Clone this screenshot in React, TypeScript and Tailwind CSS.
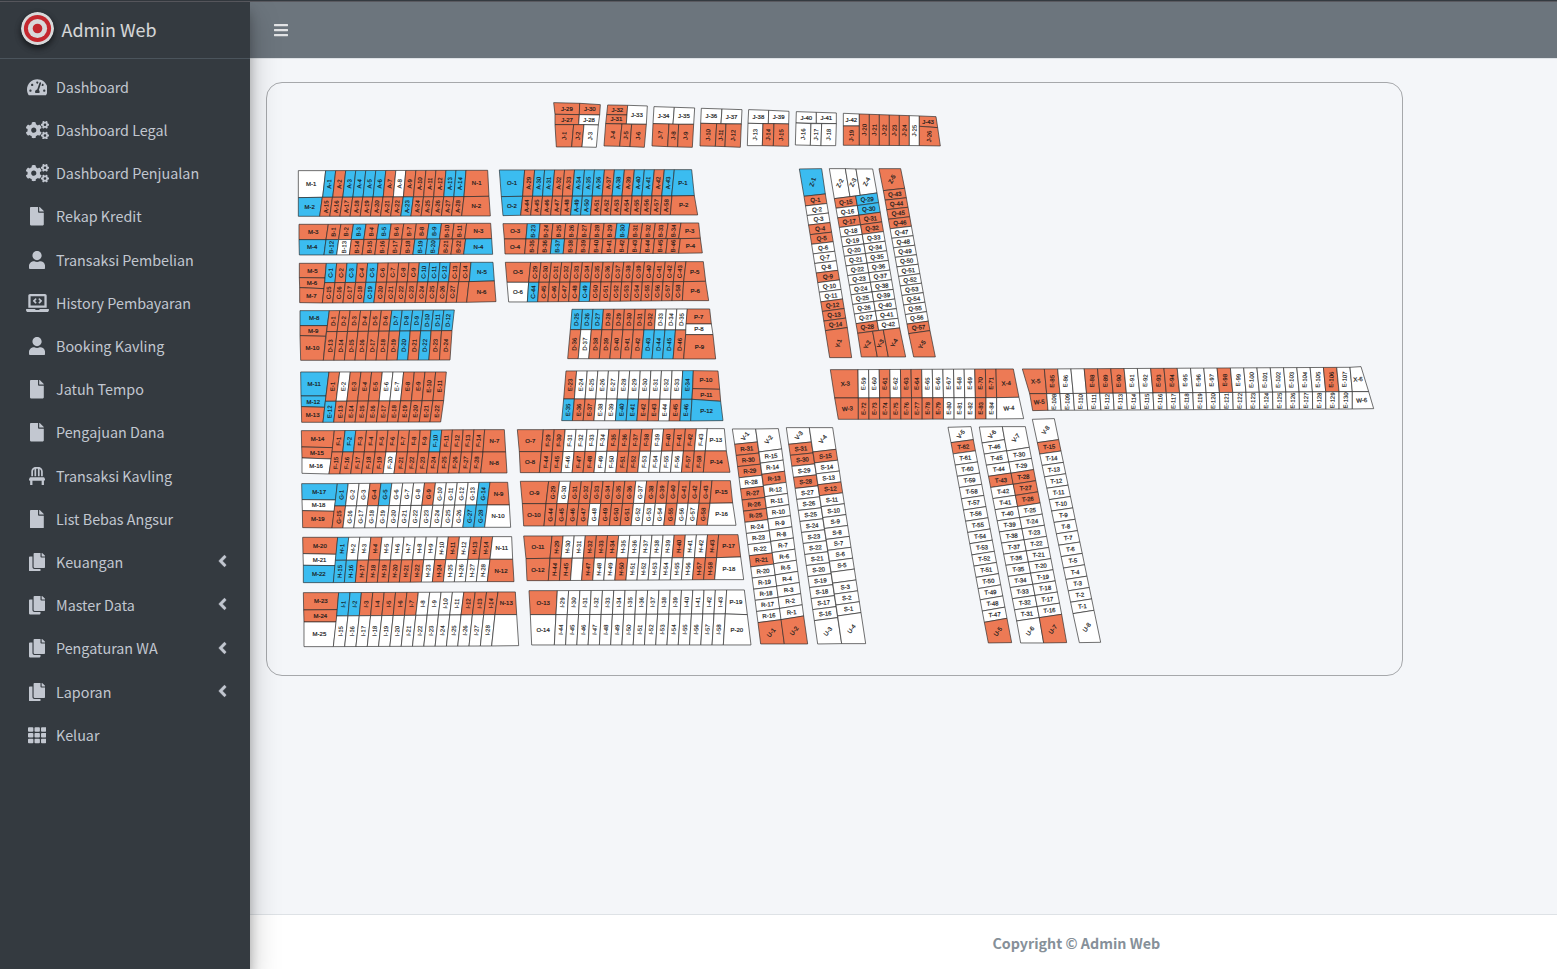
import React from 'react';
import type { IconType } from 'react-icons';
import {
  FaAngleLeft,
  FaBars,
  FaChair,
  FaCogs,
  FaCopy,
  FaFile,
  FaLaptopCode,
  FaTachometerAlt,
  FaTh,
  FaUser,
} from 'react-icons/fa';

type Status = 'o' | 'b' | 'w';
type Quad = number[]; // top-left, top-right, bottom-right, bottom-left

const FILL: Record<Status, string> = { o: '#ed7a55', b: '#3bbcf0', w: '#ffffff' };

interface LotProps {
  q: Quad;
  s: Status;
  t?: string;
  r?: number;
}

/* A single plot: outline, status colour and its label turned by r degrees. */
function Lot({ q, s, t, r = 0 }: LotProps) {
  const cx = (q[0] + q[2] + q[4] + q[6]) / 4;
  const cy = (q[1] + q[3] + q[5] + q[7]) / 4;
  const upright = r === -88;
  return (
    <g>
      <polygon points={q.join(' ')} fill={FILL[s]} stroke="#2b2b2b" strokeOpacity="0.72" strokeWidth="2.8" />
      {t && (
        <text
          x={0}
          y={6.3}
          textAnchor="middle"
          transform={`translate(${cx} ${cy}) rotate(${r})`}
          fill={upright ? '#101010' : '#1c1c1c'}
          stroke={upright ? '#101010' : '#1c1c1c'}
          strokeWidth={upright ? 0.3 : 0.6}
        >
          {t}
        </text>
      )}
    </g>
  );
}

interface StripProps {
  q: Quad;
  p: string;
  from: number;
  c: string;
  down?: boolean;
  step?: number;
  skip?: number;
}

/* A run of equal plots; "down" stacks them instead of lining them up. */
function Strip({ q, p, from, c, down, step = 1, skip }: StripProps) {
  const n = c.length;
  const mix = (a: number, b: number, k: number) => a + (b - a) * k;
  return (
    <>
      {c.split('').map((s, i) => {
        const k = i / n;
        const m = (i + 1) / n;
        const cell = down
          ? [
              mix(q[0], q[6], k), mix(q[1], q[7], k), mix(q[2], q[4], k), mix(q[3], q[5], k),
              mix(q[2], q[4], m), mix(q[3], q[5], m), mix(q[0], q[6], m), mix(q[1], q[7], m),
            ]
          : [
              mix(q[0], q[2], k), mix(q[1], q[3], k), mix(q[0], q[2], m), mix(q[1], q[3], m),
              mix(q[6], q[4], m), mix(q[7], q[5], m), mix(q[6], q[4], k), mix(q[7], q[5], k),
            ];
        const no = from + i * step;
        return (
          <Lot key={i} q={cell} s={s as Status} t={no === skip ? undefined : `${p}-${no}`} r={down ? -4 : -88} />
        );
      })}
    </>
  );
}

function Area({ x, y, children }: { x: number; y: number; children: React.ReactNode }) {
  return <g transform={`translate(${x} ${y}) scale(0.33333)`}>{children}</g>;
}

function SiteMap() {
  return (
    <svg
      className="block h-[591px] w-[1134px]"
      viewBox="267 82.7 1134 591"
      fontFamily="'Liberation Sans', Arial, sans-serif"
      fontSize="18"
    >
      <Area x={540} y={90}>
        <Lot q={[41, 37, 119, 39, 118, 73, 45, 72]} s="o" t="J-29" />
        <Lot q={[119, 39, 181, 43, 179, 74, 118, 73]} s="o" t="J-30" />
        <Lot q={[45, 72, 118, 73, 116, 103, 45, 103]} s="o" t="J-27" />
        <Lot q={[118, 73, 179, 74, 175, 104, 116, 103]} s="w" t="J-28" />
        <Lot q={[45, 103, 101, 103, 95, 170, 49, 170]} s="o" t="J-1" r={-88} />
        <Lot q={[101, 103, 132, 103, 126, 170, 95, 170]} s="o" t="J-2" r={-88} />
        <Lot q={[132, 103, 175, 104, 169, 171, 126, 170]} s="w" t="J-3" r={-88} />

        <Lot q={[203, 44, 263, 45, 261, 74, 200, 73]} s="o" t="J-32" />
        <Lot q={[200, 73, 261, 74, 259, 101, 197, 100]} s="o" t="J-31" />
        <Lot q={[263, 45, 322, 47, 319, 102, 259, 101]} s="w" t="J-33" />
        <Lot q={[197, 100, 246, 101, 239, 168, 192, 167]} s="o" t="J-4" r={-88} />
        <Lot q={[246, 101, 275, 102, 270, 169, 239, 168]} s="o" t="J-5" r={-88} />
        <Lot q={[275, 102, 319, 102, 313, 171, 270, 169]} s="o" t="J-6" r={-88} />

        <Lot q={[342, 49, 403, 51, 399, 102, 339, 100]} s="w" t="J-34" />
        <Lot q={[403, 51, 464, 53, 461, 102, 399, 102]} s="w" t="J-35" />
        <Lot q={[339, 100, 387, 101, 383, 169, 336, 167]} s="o" t="J-7" r={-88} />
        <Lot q={[387, 101, 416, 102, 413, 170, 383, 169]} s="o" t="J-8" r={-88} />
        <Lot q={[416, 102, 461, 102, 457, 171, 413, 170]} s="o" t="J-9" r={-88} />

        <Lot q={[484, 54, 546, 56, 543, 100, 482, 99]} s="w" t="J-36" />
        <Lot q={[546, 56, 606, 58, 604, 101, 543, 100]} s="w" t="J-37" />
        <Lot q={[482, 99, 530, 100, 526, 168, 480, 167]} s="o" t="J-10" r={-88} />
        <Lot q={[530, 100, 558, 101, 555, 169, 526, 168]} s="o" t="J-11" r={-88} />
        <Lot q={[558, 101, 604, 101, 601, 171, 555, 169]} s="o" t="J-12" r={-88} />

        <Lot q={[626, 58, 686, 60, 685, 100, 624, 99]} s="w" t="J-38" />
        <Lot q={[686, 60, 747, 63, 746, 101, 685, 100]} s="w" t="J-39" />
        <Lot q={[624, 99, 669, 100, 667, 166, 622, 166]} s="w" t="J-13" r={-88} />
        <Lot q={[669, 100, 702, 100, 700, 167, 667, 166]} s="o" t="J-14" r={-88} />
        <Lot q={[702, 100, 746, 101, 746, 168, 700, 167]} s="o" t="J-15" r={-88} />

        <Lot q={[769, 64, 829, 66, 829, 99, 768, 98]} s="w" t="J-40" />
        <Lot q={[829, 66, 889, 68, 889, 100, 829, 99]} s="w" t="J-41" />
        <Lot q={[768, 98, 813, 100, 811, 165, 766, 164]} s="w" t="J-16" r={-88} />
        <Lot q={[813, 100, 845, 100, 843, 166, 811, 165]} s="w" t="J-17" r={-88} />
        <Lot q={[845, 100, 889, 100, 887, 166, 843, 166]} s="w" t="J-18" r={-88} />

        <Lot q={[910, 69, 958, 71, 958, 107, 910, 107]} s="w" t="J-42" />
        <Lot q={[910, 107, 958, 107, 958, 165, 910, 165]} s="o" t="J-19" r={-88} />
        <Strip q={[958, 71, 1138, 77, 1138, 166, 958, 165]} p="J" from={20} c="ooooow" />
        <Lot q={[1138, 77, 1188, 79, 1193, 112, 1138, 108]} s="o" t="J-43" />
        <Lot q={[1138, 108, 1193, 112, 1201, 167, 1138, 166]} s="o" t="J-26" r={-88} />
      </Area>

      <Area x={290} y={160}>
        <Lot q={[25, 31, 107, 31, 98, 111, 25, 112]} s="w" t="M-1" />
        <Strip q={[107, 31, 528, 30, 522, 109, 98, 111]} p="A" from={1} c="bobbbbowoooobb" />
        <Lot q={[528, 30, 593, 30, 597, 108, 522, 109]} s="o" t="N-1" />
        <Lot q={[25, 112, 97, 111, 89, 168, 25, 168]} s="b" t="M-2" />
        <Strip q={[97, 111, 522, 109, 515, 167, 89, 168]} p="A" from={15} c="oooooooobooooo" />
        <Lot q={[522, 109, 597, 108, 601, 167, 515, 167]} s="o" t="N-2" />

        <Lot q={[27, 192, 115, 192, 108, 238, 27, 238]} s="o" t="M-3" />
        <Strip q={[115, 192, 530, 189, 524, 236, 108, 238]} p="B" from={1} c="ooboboooboo" />
        <Lot q={[530, 189, 602, 189, 605, 235, 524, 236]} s="o" t="N-3" />
        <Lot q={[27, 238, 108, 238, 102, 284, 28, 284]} s="b" t="M-4" />
        <Strip q={[108, 238, 527, 236, 521, 282, 102, 284]} p="B" from={12} c="bwooooobboo" />
        <Lot q={[527, 236, 605, 235, 608, 282, 521, 282]} s="b" t="N-4" />

        <Lot q={[28, 309, 109, 309, 105, 353, 28, 352]} s="o" t="M-5" />
        <Lot q={[28, 352, 105, 353, 102, 385, 29, 382]} s="o" t="M-6" />
        <Lot q={[29, 382, 102, 385, 97, 428, 29, 427]} s="o" t="M-7" />
        <Strip q={[109, 309, 543, 306, 538, 364, 104, 367]} p="C" from={1} c="boboboooobbboo" />
        <Lot q={[543, 306, 609, 306, 613, 362, 538, 364]} s="b" t="N-5" />
        <Strip q={[104, 367, 537, 364, 530, 426, 97, 428]} p="C" from={15} c="oooobooooooooo" skip={28} />
        <Lot q={[537, 364, 613, 362, 618, 424, 530, 426]} s="o" t="N-6" />

        <Lot q={[30, 451, 118, 451, 112, 496, 30, 496]} s="b" t="M-8" />
        <Lot q={[30, 496, 112, 496, 107, 528, 30, 526]} s="o" t="M-9" />
        <Lot q={[30, 526, 107, 528, 100, 600, 32, 600]} s="o" t="M-10" />
        <Strip q={[118, 451, 493, 449, 486, 511, 110, 514]} p="D" from={1} c="oooooobbbbbb" />
        <Strip q={[110, 514, 486, 511, 480, 599, 100, 600]} p="D" from={13} c="oooooooboboo" />
      </Area>

      <Area x={490} y={160}>
        <Lot q={[28, 29, 104, 29, 98, 108, 34, 109]} s="b" t="O-1" />
        <Strip q={[104, 29, 553, 28, 545, 107, 98, 108]} p="A" from={29} c="obboobbbobobbob" />
        <Lot q={[553, 28, 605, 28, 613, 106, 545, 107]} s="b" t="P-1" />
        <Lot q={[34, 109, 98, 108, 92, 165, 39, 166]} s="b" t="O-2" />
        <Strip q={[98, 108, 546, 107, 541, 164, 92, 165]} p="A" from={44} c="ooooobboooooooo" />
        <Lot q={[546, 107, 613, 106, 623, 164, 541, 164]} s="o" t="P-2" />

        <Lot q={[39, 190, 112, 190, 108, 236, 43, 236]} s="o" t="O-3" />
        <Strip q={[112, 190, 573, 188, 566, 235, 108, 236]} p="B" from={23} c="booooooboooo" />
        <Lot q={[573, 188, 626, 188, 631, 234, 566, 235]} s="o" t="P-3" />
        <Lot q={[43, 236, 108, 236, 104, 281, 45, 281]} s="o" t="O-4" />
        <Strip q={[108, 236, 571, 235, 566, 279, 104, 281]} p="B" from={35} c="oobooooooooo" />
        <Lot q={[571, 235, 631, 234, 637, 278, 566, 279]} s="o" t="P-4" />

        <Lot q={[46, 306, 122, 306, 116, 366, 51, 366]} s="o" t="O-5" />
        <Strip q={[122, 306, 588, 304, 581, 364, 116, 366]} p="C" from={29} c="ooooooooooooooo" />
        <Lot q={[588, 304, 640, 304, 647, 363, 581, 364]} s="o" t="P-5" />
        <Lot q={[51, 366, 116, 366, 112, 425, 56, 425]} s="w" t="O-6" />
        <Strip q={[116, 366, 581, 364, 577, 421, 112, 425]} p="C" from={44} c="boooobooooooooo" />
        <Lot q={[581, 364, 647, 363, 656, 421, 577, 421]} s="o" t="P-6" />

        <Strip q={[246, 447, 592, 446, 588, 509, 241, 508]} p="D" from={25} c="bbbooooowww" />
        <Strip q={[241, 508, 588, 509, 581, 596, 233, 595]} p="D" from={36} c="owooooobbbo" />
        <Lot q={[592, 446, 659, 446, 664, 491, 588, 491]} s="o" t="P-7" />
        <Lot q={[588, 491, 664, 491, 669, 523, 587, 523]} s="w" t="P-8" />
        <Lot q={[587, 523, 669, 523, 677, 596, 581, 596]} s="o" t="P-9" />

        <Strip q={[228, 632, 610, 631, 606, 717, 221, 716]} p="E" from={23} c="owwwwwwwwwwb" />
        <Strip q={[221, 716, 606, 717, 602, 782, 215, 781]} p="E" from={35} c="boowwbboowob" />
        <Lot q={[610, 631, 684, 632, 689, 687, 608, 685]} s="o" t="P-10" />
        <Lot q={[608, 685, 689, 687, 692, 723, 606, 717]} s="o" t="P-11" />
        <Lot q={[606, 717, 692, 723, 699, 781, 602, 782]} s="b" t="P-12" />
      </Area>

      <Area x={290} y={360}>
        <Lot q={[32, 35, 117, 35, 108, 107, 33, 107]} s="b" t="M-11" />
        <Lot q={[33, 107, 108, 107, 104, 141, 34, 139]} s="b" t="M-12" />
        <Lot q={[34, 139, 104, 141, 99, 186, 35, 186]} s="o" t="M-13" />
        <Strip q={[117, 35, 469, 35, 461, 121, 106, 123]} p="E" from={1} c="owooowwoooo" />
        <Strip q={[106, 123, 461, 121, 452, 185, 99, 186]} p="E" from={12} c="boooooooooo" />

        <Lot q={[34, 211, 133, 211, 128, 262, 35, 260]} s="o" t="M-14" />
        <Lot q={[35, 260, 128, 262, 124, 296, 36, 293]} s="o" t="M-15" />
        <Lot q={[36, 293, 124, 296, 117, 341, 36, 339]} s="w" t="M-16" />
        <Strip q={[133, 211, 584, 208, 579, 275, 126, 275]} p="F" from={1} c="oboooooooboooo" />
        <Lot q={[584, 208, 643, 208, 647, 275, 579, 275]} s="o" t="N-7" />
        <Strip q={[126, 275, 579, 275, 572, 338, 117, 341]} p="F" from={15} c="ooooowoooooooo" />
        <Lot q={[579, 275, 647, 275, 651, 338, 572, 338]} s="o" t="N-8" />

        <Lot q={[35, 370, 142, 370, 137, 419, 36, 418]} s="b" t="M-17" />
        <Lot q={[36, 418, 137, 419, 133, 453, 37, 451]} s="w" t="M-18" />
        <Lot q={[37, 451, 133, 453, 126, 503, 38, 502]} s="o" t="M-19" />
        <Strip q={[142, 370, 600, 366, 592, 434, 134, 437]} p="G" from={1} c="bwwobwwwowwwwb" />
        <Lot q={[600, 366, 653, 366, 658, 434, 592, 434]} s="o" t="N-9" />
        <Strip q={[134, 437, 592, 434, 584, 501, 126, 503]} p="G" from={15} c="owwwwwwwwwwwbb" />
        <Lot q={[592, 434, 658, 434, 662, 501, 584, 501]} s="w" t="N-10" />

        <Lot q={[38, 531, 143, 531, 139, 582, 39, 580]} s="o" t="M-20" />
        <Lot q={[39, 580, 139, 582, 136, 616, 40, 615]} s="w" t="M-21" />
        <Lot q={[40, 615, 136, 616, 130, 667, 40, 667]} s="b" t="M-22" />
        <Strip q={[143, 531, 608, 529, 600, 597, 136, 600]} p="H" from={1} c="bwwowwwwwwowoo" />
        <Lot q={[608, 529, 665, 529, 668, 597, 600, 597]} s="w" t="N-11" />
        <Strip q={[136, 600, 600, 597, 592, 664, 130, 667]} p="H" from={15} c="bboooooowowwww" />
        <Lot q={[600, 597, 668, 597, 672, 664, 592, 664]} s="o" t="N-12" />

        <Lot q={[40, 697, 146, 697, 142, 748, 41, 749]} s="o" t="M-23" />
        <Lot q={[41, 749, 142, 748, 139, 785, 42, 785]} s="o" t="M-24" />
        <Lot q={[42, 785, 139, 785, 130, 859, 42, 859]} s="w" t="M-25" />
        <Strip q={[146, 697, 624, 695, 615, 763, 140, 767]} p="I" from={1} c="bbooooowwwwooo" />
        <Lot q={[624, 695, 676, 695, 680, 763, 615, 763]} s="o" t="N-13" />
        <Strip q={[140, 767, 615, 763, 605, 857, 130, 859]} p="I" from={15} c="wwwwwwwwwwwwww" />
        <Lot q={[615, 763, 680, 763, 686, 856, 605, 857]} s="w" />
      </Area>

      <Area x={510} y={420}>
        <Lot q={[22, 28, 100, 28, 94, 94, 28, 94]} s="o" t="O-7" />
        <Strip q={[100, 28, 592, 25, 586, 92, 94, 94]} p="F" from={29} c="oowwwwoooowooow" />
        <Lot q={[592, 25, 643, 25, 649, 92, 586, 92]} s="w" t="P-13" />
        <Lot q={[28, 94, 94, 94, 88, 157, 31, 157]} s="o" t="O-8" />
        <Strip q={[94, 94, 586, 92, 580, 156, 88, 157]} p="F" from={44} c="oowoowwoowwwwoo" />
        <Lot q={[586, 92, 649, 92, 660, 156, 580, 156]} s="o" t="P-14" />

        <Lot q={[31, 183, 116, 183, 108, 250, 37, 250]} s="o" t="O-9" />
        <Strip q={[116, 183, 606, 181, 600, 249, 108, 250]} p="G" from={29} c="owoooooowoooooo" />
        <Lot q={[606, 181, 661, 181, 668, 248, 600, 249]} s="o" t="P-15" />
        <Lot q={[37, 250, 108, 250, 102, 317, 41, 317]} s="o" t="O-10" />
        <Strip q={[108, 250, 600, 249, 592, 315, 102, 317]} p="G" from={44} c="oooowooowwwowwo" />
        <Lot q={[600, 249, 668, 248, 678, 315, 592, 315]} s="w" t="P-16" />

        <Lot q={[41, 347, 126, 347, 120, 414, 48, 415]} s="o" t="O-11" />
        <Strip q={[126, 347, 626, 343, 620, 412, 120, 414]} p="H" from={29} c="owwooowwwwwowwo" />
        <Lot q={[626, 343, 684, 343, 692, 410, 620, 412]} s="o" t="P-17" />
        <Lot q={[48, 415, 120, 414, 115, 481, 51, 481]} s="o" t="O-12" />
        <Strip q={[120, 414, 620, 412, 614, 478, 115, 481]} p="H" from={44} c="oowowwowwwwwwoo" skip={46} />
        <Lot q={[620, 412, 692, 410, 701, 478, 614, 478]} s="w" t="P-18" />

        <Lot q={[57, 511, 142, 511, 138, 583, 61, 583]} s="o" t="O-13" />
        <Strip q={[142, 511, 650, 509, 646, 581, 138, 583]} p="I" from={29} c="wwwwwwwwwwwwwww" />
        <Lot q={[650, 509, 703, 509, 712, 583, 646, 581]} s="w" t="P-19" />
        <Lot q={[61, 583, 138, 583, 133, 674, 65, 674]} s="w" t="O-14" />
        <Strip q={[138, 583, 646, 581, 640, 674, 133, 674]} p="I" from={44} c="wwwwwwwwwwwwwww" />
        <Lot q={[646, 581, 712, 583, 723, 674, 640, 674]} s="w" t="P-20" />
      </Area>

      <Area x={725} y={420}>
        <Lot q={[22, 26, 92, 26, 97, 65, 29, 72]} s="w" t="V-1" r={-52} />
        <Strip q={[29, 72, 97, 65, 169, 598, 99, 607]} p="R" from={31} step={-1} c="ooowooowwwowwwww" down />
        <Lot q={[99, 607, 169, 598, 178, 671, 107, 671]} s="o" t="U-1" r={-52} />
        <Lot q={[92, 26, 160, 25, 170, 86, 102, 95]} s="w" t="V-2" r={-52} />
        <Strip q={[102, 95, 170, 86, 236, 587, 168, 598]} p="R" from={15} step={-1} c="wwowwwwwwwwwwww" down />
        <Lot q={[168, 598, 236, 587, 248, 671, 178, 671]} s="o" t="U-2" r={-52} />

        <Lot q={[184, 22, 253, 22, 259, 65, 191, 72]} s="w" t="V-3" r={-52} />
        <Strip q={[191, 72, 259, 65, 338, 592, 268, 601]} p="S" from={31} step={-1} c="oowowwwwwwwwwwww" down />
        <Lot q={[268, 601, 338, 592, 350, 670, 278, 671]} s="w" t="U-3" r={-52} />
        <Lot q={[253, 22, 323, 22, 333, 87, 264, 95]} s="w" t="V-4" r={-52} />
        <Strip q={[264, 95, 333, 87, 408, 577, 338, 587]} p="S" from={15} step={-1} c="owwowwwwwwwwwww" skip={4} down />
        <Lot q={[338, 587, 408, 577, 422, 670, 350, 670]} s="w" t="U-4" r={-52} />
      </Area>

      <Area x={790} y={160}>
        <Lot q={[28, 26, 95, 25, 106, 101, 42, 108]} s="b" t="Z-1" r={-72} />
        <Strip q={[42, 108, 106, 101, 172, 502, 106, 511]} p="Q" from={1} c="owwoowwwowwooo" down />
        <Lot q={[106, 511, 172, 502, 185, 592, 119, 592]} s="o" t="Y-1" r={-72} />

        <Lot q={[118, 25, 166, 25, 180, 109, 133, 115]} s="w" t="Z-2" r={-65} />
        <Lot q={[166, 25, 198, 26, 211, 105, 180, 109]} s="w" t="Z-3" r={-65} />
        <Lot q={[198, 26, 248, 26, 261, 98, 211, 105]} s="w" t="Z-4" r={-65} />
        <Strip q={[133, 115, 197, 107, 266, 510, 203, 519]} p="Q" from={15} c="owowwwwwwwwwwo" down />
        <Strip q={[197, 107, 261, 98, 329, 503, 266, 510]} p="Q" from={29} c="bboowwwwwwwwww" down />
        <Lot q={[203, 519, 248, 513, 262, 590, 214, 590]} s="o" t="Y-2" r={-62} />
        <Lot q={[248, 513, 280, 509, 295, 590, 262, 590]} s="o" t="Y-3" r={-62} />
        <Lot q={[280, 509, 329, 503, 347, 590, 295, 590]} s="o" t="Y-4" r={-62} />

        <Lot q={[267, 25, 332, 25, 344, 84, 280, 91]} s="o" t="Z-5" r={-62} />
        <Strip q={[280, 91, 344, 84, 420, 511, 356, 520]} p="Q" from={43} c="oooowwwwwwwwwwo" down />
        <Lot q={[356, 520, 420, 511, 436, 590, 371, 590]} s="o" t="Y-5" r={-58} />
      </Area>

      <Area x={820} y={355}>
        <Lot q={[31, 43, 114, 43, 115, 128, 44, 128]} s="o" t="X-3" r={-5} />
        <Strip q={[114, 43, 528, 41, 530, 127, 115, 128]} p="E" from={59} c="wwowoowwwwwoo" />
        <Lot q={[528, 41, 580, 41, 597, 126, 530, 127]} s="o" t="X-4" r={-5} />
        <Lot q={[44, 128, 115, 128, 115, 192, 55, 192]} s="o" t="W-3" r={-5} />
        <Strip q={[115, 128, 530, 127, 530, 191, 115, 192]} p="E" from={72} c="oooooooowwwow" />
        <Lot q={[530, 127, 597, 126, 611, 190, 530, 191]} s="w" t="W-4" r={-5} />

        <Lot q={[607, 41, 673, 41, 680, 115, 629, 115]} s="o" t="X-5" r={-5} />
        <Strip q={[673, 41, 1590, 36, 1597, 109, 680, 115]} p="E" from={85} c="owwooowwoowwwowwwwwwwow" skip={87} />
        <Lot q={[1590, 36, 1623, 34, 1646, 109, 1597, 109]} s="w" t="X-6" r={-5} />
        <Lot q={[629, 115, 680, 115, 684, 165, 638, 166]} s="o" t="W-5" r={-5} />
        <Strip q={[680, 115, 1597, 109, 1597, 161, 684, 165]} p="E" from={108} c="wwwwwwwwwwwwwwwwwwwwwww" />
        <Lot q={[1597, 109, 1646, 109, 1661, 160, 1597, 161]} s="w" t="W-6" r={-5} />
      </Area>

      <Area x={940} y={410}>
        <Lot q={[24, 51, 93, 49, 100, 88, 33, 97]} s="w" t="V-5" r={-52} />
        <Strip q={[33, 97, 100, 88, 201, 624, 133, 636]} p="T" from={62} step={-1} c="owwwwwwwwwwwwwww" down />
        <Lot q={[133, 636, 201, 624, 215, 697, 145, 698]} s="o" t="U-5" r={-55} />

        <Lot q={[118, 50, 187, 49, 194, 88, 126, 98]} s="w" t="V-6" r={-52} />
        <Strip q={[126, 98, 194, 88, 298, 622, 230, 632]} p="T" from={46} step={-1} c="wwwowwwwwwwwwwww" down />
        <Lot q={[230, 632, 298, 622, 311, 698, 242, 698]} s="w" t="U-6" r={-55} />
        <Lot q={[187, 49, 256, 49, 268, 111, 200, 122]} s="w" t="V-7" r={-52} />
        <Strip q={[200, 122, 268, 111, 365, 612, 298, 622]} p="T" from={30} step={-1} c="wwooowwwwwwwwww" down />
        <Lot q={[298, 622, 365, 612, 380, 697, 311, 698]} s="o" t="U-7" r={-55} />

        <Lot q={[277, 27, 343, 25, 356, 88, 292, 97]} s="w" t="V-8" r={-55} />
        <Strip q={[292, 97, 356, 88, 462, 600, 399, 610]} p="T" from={15} step={-1} c="owwwwwwwwwwwwww" down />
        <Lot q={[399, 610, 462, 600, 482, 696, 418, 697]} s="w" t="U-8" r={-55} />
      </Area>
    </svg>
  );
}

interface MenuItem {
  label: string;
  Icon: IconType;
  size: string;
  sub?: boolean;
}

const WIDE = 'h-[18.4px] w-[23px]';
const GAUGE = 'h-[18.4px] w-[20.7px]';
const PAGE = 'h-[18.4px] w-[13.8px]';
const NORMAL = 'h-[18.4px] w-[16.1px]';
const SQUARE = 'h-[18.4px] w-[18.4px]';

const MENU: MenuItem[] = [
  { label: 'Dashboard', Icon: FaTachometerAlt, size: GAUGE },
  { label: 'Dashboard Legal', Icon: FaCogs, size: WIDE },
  { label: 'Dashboard Penjualan', Icon: FaCogs, size: WIDE },
  { label: 'Rekap Kredit', Icon: FaFile, size: PAGE },
  { label: 'Transaksi Pembelian', Icon: FaUser, size: NORMAL },
  { label: 'History Pembayaran', Icon: FaLaptopCode, size: WIDE },
  { label: 'Booking Kavling', Icon: FaUser, size: NORMAL },
  { label: 'Jatuh Tempo', Icon: FaFile, size: PAGE },
  { label: 'Pengajuan Dana', Icon: FaFile, size: PAGE },
  { label: 'Transaksi Kavling', Icon: FaChair, size: NORMAL },
  { label: 'List Bebas Angsur', Icon: FaFile, size: PAGE },
  { label: 'Keuangan', Icon: FaCopy, size: NORMAL, sub: true },
  { label: 'Master Data', Icon: FaCopy, size: NORMAL, sub: true },
  { label: 'Pengaturan WA', Icon: FaCopy, size: NORMAL, sub: true },
  { label: 'Laporan', Icon: FaCopy, size: NORMAL, sub: true },
  { label: 'Keluar', Icon: FaTh, size: SQUARE },
];

function Sidebar() {
  return (
    <aside className="relative z-10 flex w-[250px] shrink-0 flex-col bg-[#343a40] shadow-[0_14px_28px_rgba(0,0,0,0.25),0_10px_10px_rgba(0,0,0,0.22)]">
      <div className="flex h-[57px] items-center border-b border-[#4b545c] pl-[21px]">
        <svg
          className="mb-[3px] h-[33px] w-[33px] shrink-0 rounded-full shadow-[0_3px_6px_rgba(0,0,0,0.35),0_3px_6px_rgba(0,0,0,0.3)]"
          viewBox="0 0 33 33"
        >
          <circle cx="16.5" cy="16.5" r="16.5" fill="#d8d9da" />
          <circle cx="16.5" cy="16.5" r="13.6" fill="#c4272e" />
          <circle cx="16.5" cy="16.5" r="9.6" fill="#d8d9da" />
          <circle cx="16.5" cy="16.5" r="4.8" fill="#c4272e" />
        </svg>
        <span className="mb-px ml-[7.5px] text-[17.9px] leading-none text-white/80">Admin Web</span>
      </div>
      <nav className="flex flex-col gap-[3.2px] pt-[8.1px]">
        {MENU.map(({ label, Icon, size, sub }) => (
          <a key={label} className="flex h-10 items-center pl-6 text-[#c2c7d0]">
            <span className="flex w-[26px] shrink-0 justify-center">
              <Icon className={`shrink-0 ${size}`} />
            </span>
            <span className="ml-1.5 flex-1 text-[14.34px] leading-none">{label}</span>
            {sub && (
              <FaAngleLeft className="mr-[23.5px] mb-0.5 h-[18px] w-[9px]" stroke="currentColor" strokeWidth="10" />
            )}
          </a>
        ))}
      </nav>
    </aside>
  );
}

export default function App() {
  return (
    <div className="flex h-[969px] w-[1557px] flex-col overflow-hidden bg-[#f4f6f9] font-['Noto_Sans_CJK_JP','Noto_Sans',sans-serif]">
      <div className="h-0.5 shrink-0 border-b border-[#5a5a60] bg-[#343a40]" />
      <div className="flex min-h-0 flex-1">
        <Sidebar />
        <div className="flex min-w-0 flex-1 flex-col">
          <header className="flex h-[56px] shrink-0 items-center bg-[#6c757d] pl-6 text-white/80">
            <FaBars className="h-4 w-3.5" />
          </header>
          <main className="flex-1 border-t border-[#dee2e6] pt-[23px] pl-4">
            <div className="h-[594px] w-[1137px] overflow-hidden rounded-2xl border border-[#a6a8ab]">
              <SiteMap />
            </div>
          </main>
          <footer className="flex h-[55px] shrink-0 items-center border-t border-[#dee2e6] bg-white pt-0.5 pl-[742.5px] text-[14.28px] font-bold text-[#869099]">
            Copyright © Admin Web
          </footer>
        </div>
      </div>
    </div>
  );
}
